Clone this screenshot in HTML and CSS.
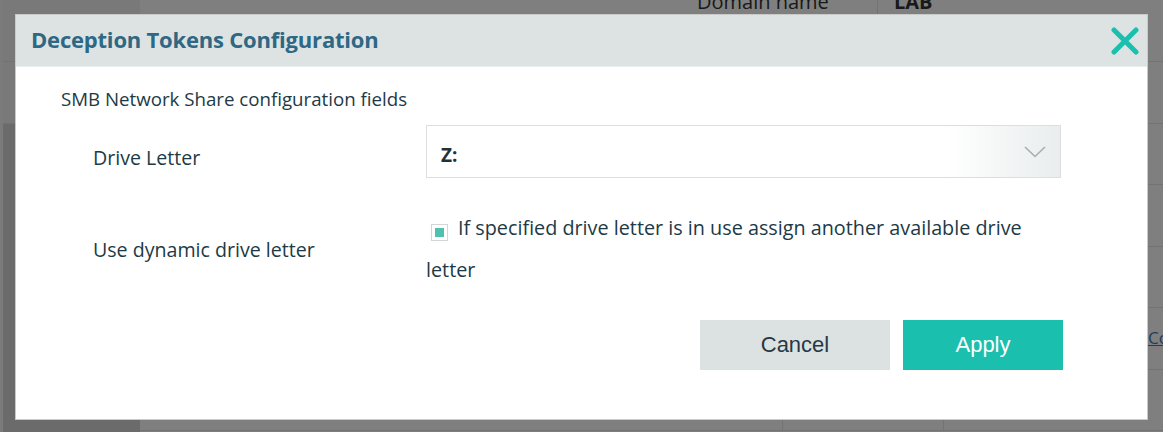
FILE: index.html
```html
<!DOCTYPE html>
<html lang="en">
<head>
  <meta charset="UTF-8" />
  <meta name="viewport" content="width=device-width, initial-scale=1.0"/>
  <title>Deception Tokens Configuration</title>
  <link rel="stylesheet" href="styles.css">
</head>
<body>

  <!-- Page behind the dialog -->
  <div class="page">
    <aside class="sidebar">
      <div class="side-head">
        <div class="side-head-row"></div>
        <div class="side-head-row"></div>
      </div>
      <ul class="side-nav">
        <li></li>
        <li></li>
        <li></li>
        <li></li>
        <li></li>
      </ul>
    </aside>

    <main class="content">
      <div class="row row-first">
        <span class="cell cell-wide"></span>
        <span class="cell key">Domain name</span>
        <span class="cell value">LAB</span>
      </div>
      <div class="row"></div>
      <div class="row"></div>
      <div class="row"></div>
      <div class="row"></div>
      <div class="row row-link"><a href="#">Configure</a></div>
      <div class="row row-split">
        <span class="cell"></span>
        <span class="cell"></span>
        <span class="cell"></span>
      </div>
    </main>
  </div>

  <div class="overlay"></div>

  <!-- Dialog -->
  <div class="modal">
    <div class="modal-header">
      <h2>Deception Tokens Configuration</h2>
      <button class="close-btn" aria-label="Close">
        <svg width="28" height="28" viewBox="0 0 28 28">
          <path d="M3 3 L25 25 M25 3 L3 25" stroke="#1abfae" stroke-width="5" stroke-linecap="round" fill="none"/>
        </svg>
      </button>
    </div>

    <div class="modal-body">
      <p class="section-title">SMB Network Share configuration fields</p>

      <div class="field field-drive">
        <label class="field-label">Drive Letter</label>
        <div class="select">
          <span class="select-value">Z:</span>
          <svg width="22" height="12" viewBox="0 0 22 12">
            <path d="M1 1 L11 10.5 L21 1" stroke="#a9adae" stroke-width="1.6" fill="none"/>
          </svg>
        </div>
      </div>

      <div class="field field-dynamic">
        <label class="field-label">Use dynamic drive letter</label>
        <p class="check-text"><span class="checkbox"><span class="checkbox-mark"></span></span>If specified drive letter is in use assign another available drive letter</p>
      </div>

      <div class="actions">
        <button class="btn btn-cancel">Cancel</button>
        <button class="btn btn-apply">Apply</button>
      </div>
    </div>
  </div>

</body>
</html>
```

FILE: styles.css
```css
body {
  margin: 0;
  font-family: "Open Sans", "Noto Sans", sans-serif;
  background-color: #fff;
  overflow: hidden;
  height: 432px;
}

/* ---- page behind ---- */

.page {
  display: flex;
  height: 432px;
}

.sidebar {
  width: 137px;
  flex-shrink: 0;
  border-left: 3px solid #f6f6f6;
  background-color: #d7d7d7;
}

.side-head {
  background-color: #f3f3f3;
}

.side-head-row {
  height: 61px;
  border-bottom: 1px solid #e2e2e2;
}

.side-nav {
  list-style: none;
  margin: 0;
  padding: 0;
}

.side-nav li {
  height: 61px;
}

.content {
  flex: 1;
  margin-top: -20px;
  overflow: hidden;
}

.row {
  height: 60.5px;
  border-bottom: 1px solid #e6e6e6;
}

.row-first {
  height: 81px;
  display: grid;
  grid-template-columns: 542px 195px 1fr;
  font-size: 20px;
  color: #333;
}

.row-first .cell {
  padding-top: 8px;
}

.row-first .key {
  padding-left: 15px;
}

.row-first .value {
  padding-left: 16px;
  border-left: 1px solid #e6e6e6;
  font-weight: bold;
}

.row-link {
  padding-left: 1008px;
  white-space: nowrap;
  line-height: 60px;
}

.row-link a {
  color: #3b7fc0;
  font-size: 17px;
}

.row-split {
  display: grid;
  grid-template-columns: 642px 161px 1fr;
}

.row-split .cell + .cell {
  border-left: 1px solid #e6e6e6;
}

.overlay {
  position: fixed;
  inset: 0;
  background: rgba(0, 0, 0, 0.5);
}

/* ---- dialog ---- */

.modal {
  position: fixed;
  top: 14px;
  left: 15px;
  width: 1133px;
  height: 406px;
  box-sizing: border-box;
  background: #fff;
  border: 1px solid #c9cbcb;
}

.modal-header {
  display: flex;
  align-items: center;
  justify-content: space-between;
  height: 51px;
  padding: 0 8px 0 15px;
  background-color: #dde3e3;
  border-bottom: 1px solid #e9eeee;
}

.modal-header h2 {
  margin: 0 0 3px;
  font-size: 22px;
  font-weight: 700;
  color: #2e6884;
  letter-spacing: -0.2px;
}

.close-btn {
  background: none;
  border: none;
  padding: 0;
  width: 28px;
  height: 28px;
  cursor: pointer;
}

.modal-body {
  padding: 20px 86px 0 45px;
  color: #1d3a46;
}

.section-title {
  margin: 0;
  font-size: 18.7px;
  line-height: 24px;
}

.field {
  display: grid;
  grid-template-columns: 333px 1fr;
  align-items: center;
  margin-left: 32px;
}

.field-drive {
  margin-top: 14px;
}

.field-drive .field-label {
  padding-top: 12px;
}

.field-dynamic {
  margin-top: 29px;
}

.field-label {
  font-size: 19.6px;
}

.select {
  display: flex;
  align-items: center;
  justify-content: space-between;
  height: 53px;
  box-sizing: border-box;
  padding: 0 14px 0 14px;
  border: 1px solid #dcdfdf;
  background: linear-gradient(90deg, #fff 0, #fff 82%, #e9eded 100%);
}

.select-value {
  padding-top: 6px;
  font-size: 19px;
  font-weight: bold;
  color: #1f323c;
}

.check-text {
  margin: 0;
  font-size: 19.8px;
  line-height: 42px;
}

.checkbox {
  display: inline-flex;
  align-items: center;
  justify-content: center;
  width: 17px;
  height: 17px;
  box-sizing: border-box;
  margin: 0 10px 0 5px;
  vertical-align: -2px;
  border: 1px solid #d3d6d6;
  background: #fff;
}

.checkbox-mark {
  width: 9px;
  height: 9px;
  background-color: #4fc1ae;
}

.actions {
  display: flex;
  justify-content: flex-end;
  gap: 13px;
  margin-top: 29px;
  margin-right: -2px;
}

.btn {
  height: 50px;
  border: none;
  font-family: "Liberation Sans", Arial, sans-serif;
  font-size: 22px;
  cursor: pointer;
}

.btn-cancel {
  width: 190px;
  background-color: #dce2e2;
  color: #263844;
}

.btn-apply {
  width: 160px;
  background-color: #1abfae;
  color: #fff;
}
```
